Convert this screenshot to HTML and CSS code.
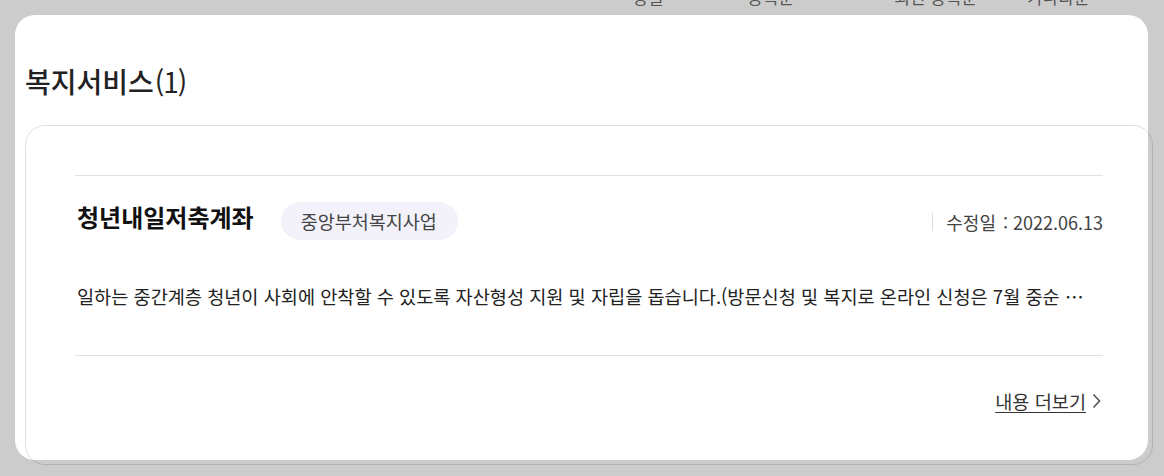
FILE: index.html
```html
<!DOCTYPE html>
<html lang="ko">
<head>
<meta charset="utf-8">
<link rel="stylesheet" href="styles.css">
</head>
<body>
<div class="topbar">
  <span class="top-item t1">정렬</span>
  <span class="top-item t2">등록순</span>
  <span class="top-item t3">최신 등록순</span>
  <span class="top-item t4">가나다순</span>
</div>
<div class="panel">
  <h2 class="section-title">복지서비스<span class="count">(1)</span></h2>
  <div class="card">
    <div class="card-inner">
      <div class="item-head">
        <div class="item-left">
          <h3 class="item-title">청년내일저축계좌</h3>
          <span class="tag">중앙부처복지사업</span>
        </div>
        <div class="item-date"><span class="divider"></span>수정일 <span class="colon">:</span>2022.06.13</div>
      </div>
      <p class="desc">일하는 중간계층 청년이 사회에 안착할 수 있도록 자산형성 지원 및 자립을 돕습니다.(방문신청 및 복지로 온라인 신청은 7월 중순 이후 가능합니다.)</p>
      <div class="more-row">
        <a class="more" href="#"><span class="more-text">내용 더보기</span><svg class="chev" width="9" height="16" viewBox="0 0 9 16"><path d="M1.5 1.5 L7.5 8 L1.5 14.5" fill="none" stroke="#555" stroke-width="1.6"/></svg></a>
      </div>
    </div>
  </div>
</div>
</body>
</html>
```
FILE: styles.css
```css
* { box-sizing: border-box; }
html, body { margin: 0; padding: 0; }
body {
  background: #cccccc;
  font-family: "Noto Sans CJK KR", "Noto Sans", sans-serif;
  color: #222;
  width: 1164px;
  height: 476px;
  overflow: hidden;
}
.topbar {
  height: 15px;
  display: flex;
  align-items: flex-end;
  padding-bottom: 8px;
  overflow: hidden;
  font-size: 17px;
  color: #555;
}
.top-item { line-height: 20px; white-space: nowrap; }
.t1 { margin-left: 632px; }
.t2 { margin-left: 84px; }
.t3 { margin-left: 100px; }
.t4 { margin-left: 50px; }
.panel {
  margin-left: 15px;
  width: 1133px;
  height: 445px;
  background: #fff;
  border-radius: 20px;
  padding: 47px 0 0 10px;
}
.section-title {
  margin: 0;
  font-size: 28px;
  line-height: 38px;
  font-weight: 500;
  color: #222;
}
.count { margin-left: 1px; font-weight: 400; letter-spacing: -1px; }
.card {
  margin-top: 25px;
  width: 1128px;
  height: 340px;
  border: 1px solid rgba(0,0,0,0.13);
  border-radius: 20px;
  padding: 49px 49px 0 49px;
}
.card-inner {
  border-top: 1px solid #e2e2e2;
}
.item-head {
  margin-top: 26px;
  height: 38px;
  display: flex;
  align-items: center;
  justify-content: space-between;
}
.item-left { display: flex; align-items: center; }
.item-title {
  margin: -8px 0 0 2px;
  font-size: 24px;
  line-height: 32px;
  font-weight: 700;
  color: #111;
}
.tag {
  margin-left: 27px;
  height: 38px;
  line-height: 38px;
  padding: 0 21px 0 20px;
  border-radius: 19px;
  background: #f3f2fa;
  font-size: 18.5px;
  color: #444;
}
.item-date {
  display: flex;
  align-items: center;
  font-size: 18px;
  color: #444;
  margin-top: 2px;
}
.divider {
  width: 1px;
  height: 18px;
  background: #ddd;
  margin-right: 13px;
}
.colon { margin: 0 5px 0 7px; }
.desc {
  margin: 43px 0 0 0;
  font-size: 18.6px;
  line-height: 26px;
  color: #222;
  white-space: nowrap;
  overflow: hidden;
  text-overflow: ellipsis;
  padding-bottom: 46px;
  border-bottom: 1px solid #e2e2e2;
  width: 1028px;
  padding-left: 2px;
  padding-right: 18px;
}
.more-row {
  margin-top: 32px;
  display: flex;
  justify-content: flex-end;
}
.more {
  display: flex;
  align-items: center;
  color: #333;
  font-size: 18.6px;
  line-height: 26px;
  text-decoration: none;
  margin-right: 2px;
}
.more-text { text-decoration: underline; text-underline-offset: 3px; }
.chev { margin-left: 6px; }
```
